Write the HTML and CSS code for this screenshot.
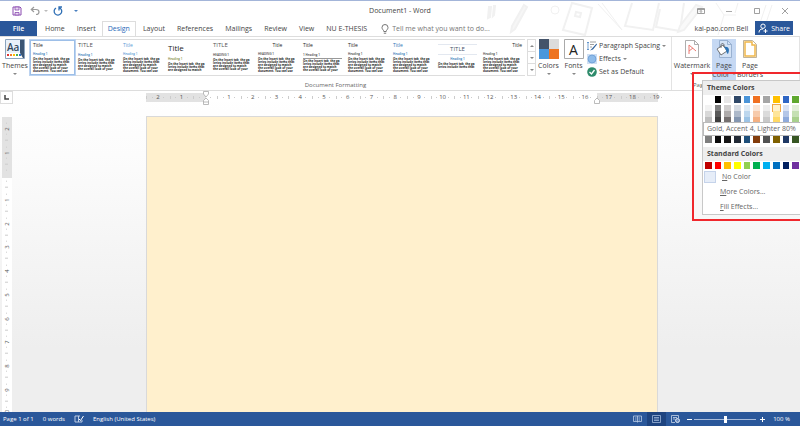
FILE: index.html
```html
<!DOCTYPE html>
<html lang="en">

<head>
  <meta charset="UTF-8">
  <meta name="viewport" content="width=device-width, initial-scale=1.0">
  <title>Document1 - Word</title>
  <link rel="stylesheet" href="styles.css">
</head>

<body>
  <header class="top">
    <svg class="doodles" viewBox="0 0 320 36" aria-hidden="true">
      <g fill="none" stroke="#f1f1f1" stroke-width="2">
        <path d="M9 6l2 0-1 10-2 1zM14 5l1 0-1 9-1 1z" />
        <path d="M44 4l3 2-12 22-4 3 1-6z" fill="#f6f6f6" />
        <circle cx="75" cy="9" r="4" stroke-width="1" />
        <path d="M92 2l20 5-7 27-22-5zM96 11l5 1-1 4-5-1z" />
        <path d="M118 3l24 26M122 2l20 27" stroke-width="1" />
        <path d="M152 2l-7 23 28 4 6-27M180 8l-4 18 24 4 4-28" />
        <path d="M216 4l-16 21-2 6 6-2 18-23z" fill="#f9f9f9" />
        <path d="M236 2l8 12h12M244 14l-6 20M258 2l-3 10M286 4l-10 30M292 4l-10 30" stroke-width="1" />
      </g>
    </svg>

    <div class="titlebar">
      <div class="quick">
        <button type="button" aria-label="Save"><svg width="10" height="10" viewBox="0 0 10 10"><path d="M1 1h7l1 1v7H1z" fill="#fff" stroke="#8a4bb0" /><path d="M3 1h4v3H3zM3 6.500h4V9H3z" fill="#e8d8f0" stroke="#8a4bb0" stroke-width=".8" /></svg></button>
        <button type="button" aria-label="Undo" class="undo"><svg width="10" height="10" viewBox="0 0 10 10"><path d="M4 1L1.300 3.500 4 6M1.500 3.500H6c4 0 4 5 0 5" fill="none" stroke="#9a9a9a" stroke-width="1.200" /></svg></button>
        <span class="caret pale"></span>
        <button type="button" aria-label="Redo"><svg width="10" height="10" viewBox="0 0 10 10"><path d="M6.500 1.800A3.800 3.800 0 1 1 3 2M9 1H6v3.500" fill="none" stroke="#2f6fb5" stroke-width="1.300" /></svg></button>
        <span class="caret blue"></span>
      </div>
      <h1>Document1 - Word</h1>
      <div class="window-buttons">
        <button type="button" aria-label="Ribbon display options"><svg width="8" height="8" viewBox="0 0 8 8"><path d="M.5 1.500h7v5h-7zM.5 2.500h7M4 6V3.500M3 4.500l1-1 1 1" fill="none" stroke="#888" stroke-width=".8" /></svg></button>
        <button type="button" aria-label="Minimize"><svg width="8" height="8" viewBox="0 0 8 8"><path d="M1 4.500h6" stroke="#aaa" /></svg></button>
        <button type="button" aria-label="Maximize"><svg width="8" height="8" viewBox="0 0 8 8"><path d="M1.500 1.500h5v5h-5z" fill="none" stroke="#888" stroke-width=".8" /></svg></button>
        <button type="button" aria-label="Close"><svg width="8" height="8" viewBox="0 0 8 8"><path d="M1 1l6 6M7 1L1 7" stroke="#888" stroke-width=".8" /></svg></button>
      </div>
    </div>

    <nav class="tabs">
      <button type="button" class="file">File</button>
      <a href="#">Home</a>
      <a href="#">Insert</a>
      <a href="#" class="active">Design</a>
      <a href="#">Layout</a>
      <a href="#">References</a>
      <a href="#">Mailings</a>
      <a href="#">Review</a>
      <a href="#">View</a>
      <a href="#">NU E-THESIS</a>
      <label class="tell">
        <svg width="8" height="10" viewBox="0 0 8 10"><path d="M2.800 7.500C2.800 6 1 5.500 1 3.500a3 3 0 0 1 6 0C7 5.500 5.200 6 5.200 7.500zM2.800 9.200h2.400" fill="none" stroke="#666" stroke-width=".9" /></svg>
        <input type="text" placeholder="Tell me what you want to do..." aria-label="Tell me what you want to do">
      </label>
      <span class="user">kai-pao.com Bell</span>
      <button type="button" class="share">
        <svg width="10" height="10" viewBox="0 0 10 10"><path d="M1 9.500C1 7 2.500 6 5 6M7.500 6v4M5.500 8h4" fill="none" stroke="#fff" /><circle cx="5" cy="3.200" r="2.200" fill="none" stroke="#fff" /></svg>
        Share
      </button>
    </nav>
  </header>

  <section class="ribbon">
    <div class="group formatting">
      <div class="tools">
        <button type="button" class="big themes">
          <svg width="20" height="20" viewBox="0 0 20 20"><path d="M.5.5h19v19H.5z" fill="#fff" stroke="#8ba3bd" /><path d="M15 1h4v18h-1L15 14z" fill="#3b5574" /><path d="M1 1h14v13H1z" fill="#e9f1fa" /><text x="2" y="12" class="aa">Aa</text><path d="M2 15h2v2H2z" fill="#d33" /><path d="M5 15h2v2H5z" fill="#ed7d31" /><path d="M8 15h2v2H8z" fill="#ffc000" /><path d="M11 15h2v2h-2z" fill="#4caf50" /><path d="M14 15h2v2h-2z" fill="#2e75c6" /></svg>
          <span>Themes</span>
          <span class="caret"></span>
        </button>
        <div class="gallery" id="gallery"></div>
        <div class="scroller">
          <button type="button" aria-label="Previous row"><span class="caret up"></span></button>
          <button type="button" aria-label="Next row"><span class="caret"></span></button>
          <button type="button" aria-label="More"><span class="caret more"></span></button>
        </div>
        <button type="button" class="big">
          <svg width="20" height="20" viewBox="0 0 20 20"><path d="M0 0h10v10H0z" fill="#44546a" /><path d="M10 0h10v10H10z" fill="#dcdcdc" /><path d="M0 10h10v10H0z" fill="#4a97dc" /><path d="M10 10h10v10H10z" fill="#ee7420" /></svg>
          <span>Colors</span>
          <span class="caret"></span>
        </button>
        <button type="button" class="big">
          <svg width="20" height="20" viewBox="0 0 20 20"><path d="M.5.5h19v19H.5z" fill="#fff" stroke="#aaa" /><text x="5" y="16" class="letter">A</text></svg>
          <span>Fonts</span>
          <span class="caret"></span>
        </button>
        <div class="stack">
          <button type="button"><svg width="10" height="10" viewBox="0 0 10 10"><path d="M3 1h6M3 3.500h4M3 6h2" stroke="#888" stroke-width=".8" /><path d="M1 1v8M0 2l1-1 1 1M0 8l1 1 1-1" fill="none" stroke="#3d7cc0" stroke-width=".7" /><path d="M9.500 2.500L5 7.500l-2 2 3-1 4-5z" fill="#33649e" /></svg>Paragraph Spacing<span class="caret"></span></button>
          <button type="button"><svg width="10" height="10" viewBox="0 0 10 10"><path d="M0 0h10v10H0z" fill="#cfdff3" /><circle cx="5" cy="5" r="4" fill="#8fbcea" stroke="#5b90cc" stroke-width=".6" /></svg>Effects<span class="caret"></span></button>
          <button type="button"><svg width="10" height="10" viewBox="0 0 10 10"><circle cx="5" cy="5" r="4.800" fill="#2e8b6b" /><path d="M2.500 5l2 2L7.500 3" fill="none" stroke="#fff" stroke-width="1.300" /></svg>Set as Default</button>
        </div>
      </div>
      <div class="caption">Document Formatting</div>
    </div>

    <div class="group background">
      <div class="tools">
        <button type="button" class="big watermark">
          <svg width="14" height="18" viewBox="0 0 14 18"><path d="M.5.5h9l4 4v13H.5z" fill="#fff" stroke="#999" stroke-width=".8" /><path d="M9.500.5v4h4" fill="none" stroke="#999" stroke-width=".8" /><path d="M4 14V5l7 6M4 11l4-3" fill="none" stroke="#ec7a72" /></svg>
          <span>Watermark</span>
          <span class="caret"></span>
        </button>
        <div class="dropdown">
          <button type="button" class="big pressed" aria-expanded="true">
            <svg width="18" height="18" viewBox="0 0 18 18"><path d="M4.500.5h8l4 4v13h-12z" fill="#d3e2f5" stroke="#8ca6c8" stroke-width=".8" /><path d="M12.500.5v4h4" fill="none" stroke="#8ca6c8" stroke-width=".8" /><path d="M2 9l6-4 4 6-6 4z" fill="#fff" stroke="#555" stroke-width=".8" /><path d="M6 8V5c0-2 3-2 3 0v2" fill="none" stroke="#555" stroke-width=".8" /><path d="M9 7c5-1 6 3 4 7-2-1-1-4-4-7z" fill="#2e75b6" /></svg>
            <span>Page</span>
            <span>Color<i class="caret"></i></span>
          </button>
          <div class="color-menu">
            <h2>Theme Colors</h2>
            <div class="swatches" id="themeColors"></div>
            <div class="swatches tints" id="themeTints"></div>
            <div class="tooltip" role="tooltip">Gold, Accent 4, Lighter 80%</div>
            <div class="swatches" id="themeDark"></div>
            <h2>Standard Colors</h2>
            <div class="swatches" id="standardColors"></div>
            <button type="button" class="item none"><i></i><span><u>N</u>o Color</span></button>
            <button type="button" class="item"><span><u>M</u>ore Colors...</span></button>
            <button type="button" class="item"><span><u>F</u>ill Effects...</span></button>
          </div>
          <div class="highlight"></div>
        </div>
        <button type="button" class="big borders">
          <svg width="14" height="18" viewBox="0 0 14 18"><path d="M.5.5h9l4 4v13H.5z" fill="#fff" stroke="#b0a080" stroke-width=".8" /><path d="M2 2h7v3h3v11H2z" fill="none" stroke="#f0b64a" stroke-width="1.500" /></svg>
          <span>Page</span>
          <span>Borders</span>
        </button>
      </div>
      <div class="caption">Page Background</div>
    </div>
  </section>

  <main class="workspace">
    <div class="ruler-row">
      <button type="button" class="tab-stop" aria-label="Left tab"><svg width="5" height="5" viewBox="0 0 5 5"><path d="M1 0v4h4" fill="none" stroke="#444" stroke-width="1.500" /></svg></button>
      <div class="ruler-area">
        <div class="ruler">
          <div class="scale" id="hScale"></div>
          <svg class="marker indent" width="8" height="14" viewBox="0 0 8 14"><path d="M1.500.5h5V3L4 6 1.500 3zM4 7l2.500 2.500v4h-5v-4zM1.500 11h5" fill="#fff" stroke="#aaa" stroke-width=".8" /></svg>
          <svg class="marker right" width="8" height="7" viewBox="0 0 8 7"><path d="M4 1l2.500 2.500v3h-5v-3z" fill="#fff" stroke="#aaa" stroke-width=".8" /></svg>
        </div>
      </div>
    </div>
    <div class="canvas">
      <div class="v-ruler">
        <div class="scale" id="vScale"></div>
      </div>
      <div class="page-area">
        <div class="page"></div>
      </div>
    </div>
  </main>

  <footer class="status">
    <span>Page 1 of 1</span>
    <span>0 words</span>
    <svg width="10" height="8" viewBox="0 0 10 8"><path d="M6 1H1v6h7V5M4.500 1v6" fill="none" stroke="#c9d6ea" stroke-width=".9" /><path d="M5 4l1.500 1.500L9.500 1" fill="none" stroke="#fff" /></svg>
    <span>English (United States)</span>
    <div class="views">
      <button type="button" aria-label="Read mode"><svg width="9" height="8" viewBox="0 0 9 8"><path d="M.5 1h8v5.500h-8zM4.500 1v6.500M2 3h1.500M2 5h1.500M5.500 3H7M5.500 5H7" fill="none" stroke="#b9cae4" stroke-width=".8" /></svg></button>
      <button type="button" class="on" aria-label="Print layout"><svg width="9" height="8" viewBox="0 0 9 8"><path d="M.5.5h8v7h-8zM2 2.500h5M2 4h5M2 5.500h5" fill="none" stroke="#9db5d8" stroke-width=".8" /></svg></button>
      <button type="button" aria-label="Web layout"><svg width="9" height="8" viewBox="0 0 9 8"><path d="M4 7.500H.5v-7h7V3M2 2.500h4M2 4h2" fill="none" stroke="#c9d6ea" stroke-width=".8" /><circle cx="6.500" cy="5.500" r="2" fill="#6f90c4" stroke="#fff" stroke-width=".8" /></svg></button>
      <button type="button" class="step minus" aria-label="Zoom out"></button>
      <input type="range" min="10" max="190" value="100" aria-label="Zoom">
      <button type="button" class="step plus" aria-label="Zoom in"></button>
      <span class="percent">100 %</span>
    </div>
  </footer>

  <script src="script.js"></script>
</body>

</html>
```
FILE: styles.css
```css
* {
  box-sizing: border-box;
}

body {
  display: flex;
  flex-direction: column;
  height: 100vh;
  margin: 0;
  overflow: hidden;
  font-family: "Open Sans", "Noto Sans", sans-serif;
  font-size: 7px;
  line-height: 10px;
  color: #444;
  background: #fff;
}

button {
  padding: 0;
  border: 0;
  background: none;
  font: inherit;
  color: inherit;
}

svg {
  display: block;
  flex: none;
}

/* little drop-down arrow */
.caret {
  display: inline-block;
  flex: none;
  border: 2px solid transparent;
  border-top-color: #888;
  border-bottom: 0;
}

.caret.pale {
  border-top-color: #bbb;
}

.caret.blue {
  border-top-color: #4a80c0;
}

.caret.up {
  transform: rotate(180deg);
}

/* title bar */
.top {
  position: relative;
  border-top: 1px solid #a3b5d9;
}

.doodles {
  position: absolute;
  top: 0;
  right: 0;
  width: 320px;
  height: 36px;
}

.titlebar {
  position: relative;
  display: grid;
  grid-template-columns: 1fr auto 1fr;
  align-items: center;
  height: 20px;
}

.titlebar h1 {
  margin: 0;
  font-size: 7px;
  font-weight: 400;
}

.quick {
  display: flex;
  align-items: center;
  padding-left: 12px;
}

.quick .undo {
  margin-left: 8px;
}

.quick .caret {
  margin: 0 5px 0 4px;
}

.quick .caret.blue {
  margin-left: 11px;
}

.window-buttons {
  display: flex;
  justify-content: flex-end;
  gap: 20px;
  padding-right: 11px;
}

/* ribbon tabs */
.tabs {
  position: relative;
  display: flex;
  align-items: stretch;
  height: 15px;
  line-height: 15px;
}

.tabs a {
  padding: 0 6px;
  color: #444;
  text-decoration: none;
}

.tabs .file {
  width: 37px;
  margin-right: 2px;
  background: #2a579a;
  color: #fff;
  font-weight: 600;
}

.tabs a.active {
  padding: 0 5px;
  margin-right: 1px;
  border: 1px solid #ddd;
  border-bottom: 0;
  background: #fff;
  color: #2a6ab8;
  line-height: 13px;
}

.tell {
  display: flex;
  flex: 1;
  align-items: center;
  gap: 3px;
  padding-left: 8px;
}

.tell input {
  flex: 1;
  min-width: 0;
  padding: 0;
  border: 0;
  background: none;
  font: inherit;
}

.tell input::placeholder {
  color: #777;
  opacity: 1;
}

.user {
  margin-right: 7px;
}

.share {
  display: flex;
  align-items: center;
  gap: 3px;
  margin: 0 7px 1px 0;
  padding: 0 3px;
  background: #2a579a;
  color: #fff;
}

/* ribbon */
.ribbon {
  display: flex;
  height: 55px;
  border-top: 1px solid #ddd;
  border-bottom: 1px solid #ddd;
}

.group {
  display: flex;
  flex-direction: column;
  border-right: 1px solid #e3e3e3;
}

.tools {
  display: flex;
  align-items: flex-start;
  height: 44px;
  padding-top: 2px;
}

.caption {
  font-size: 6px;
  line-height: 10px;
  text-align: center;
  color: #666;
}

.formatting {
  width: 672px;
}

.big {
  display: flex;
  flex-direction: column;
  align-items: center;
  width: 25px;
  height: 41px;
}

.big svg {
  margin-bottom: 2px;
}

.big svg[height="18"] {
  margin: 1px 0 3px;
}

.big span {
  line-height: 9px;
}

.big > .caret {
  margin-top: 3px;
}

.themes {
  width: 30px;
}

.aa {
  font: 600 10px "Open Sans", sans-serif;
  fill: #34495e;
}

.letter {
  font: 14px "Open Sans", sans-serif;
  fill: #222;
}

.gallery {
  display: flex;
  height: 37px;
  border-top: 1px solid #ddd;
  border-bottom: 1px solid #ddd;
}

.style-set {
  display: flex;
  flex-direction: column;
  width: 45px;
  height: 35px;
  padding: 1px 3px 0;
  text-align: left;
}

.style-set.selected {
  border: 1px solid #9dbfe8;
  outline: 1px solid #bcd3f0;
  padding: 0 2px;
}

.style-set b {
  font-size: 5px;
  font-weight: 400;
  line-height: 9px;
  color: #222;
}

.style-set em {
  margin-top: 2px;
  font-size: 3px;
  font-style: normal;
  font-weight: 600;
  line-height: 5px;
}

.style-set p {
  margin: 1px 0 0;
  font-size: 3px;
  font-weight: 700;
  line-height: 3px;
  white-space: pre;
  color: #222;
}

.style-set.caps b {
  font-size: 6px;
  color: #555;
}

.style-set.large b {
  font-size: 8px;
  line-height: 14px;
}

.style-set.low em {
  margin-top: 3px;
}

.style-set.blue b,
.style-set.blue em,
.style-set.blue-head em {
  color: #2e75b6;
}

.style-set.light b,
.style-set.light em {
  color: #5b9bd5;
}

.style-set.olive em {
  color: #7f8a3a;
}

.style-set.centered b,
.style-set.middle b,
.style-set.centered em {
  text-align: center;
}

.style-set.centered b {
  margin-top: 3px;
  border-top: 1px solid #e3e8f0;
  border-bottom: 1px solid #e3e8f0;
  color: #44546a;
}

.style-set.ruled em {
  border-bottom: 1px solid #999;
}

.style-set.right b {
  text-align: right;
}

.scroller {
  display: flex;
  flex-direction: column;
  width: 9px;
  margin: 0 0 0 2px;
}

.scroller button {
  display: flex;
  align-items: center;
  justify-content: center;
  height: 13px;
  margin-bottom: -1px;
  border: 1px solid #ddd;
}

.stack {
  padding-left: 1px;
}

.stack button {
  display: flex;
  align-items: center;
  gap: 2px;
  height: 13px;
}

.watermark {
  width: 40px;
}

.background {
  flex: 1;
  min-width: 0;
}

.background .caption {
  padding-left: 21px;
  text-align: left;
}

.borders {
  width: 28px;
}

.dropdown {
  position: relative;
}

.pressed {
  width: 24px;
  background: #c5d8f3;
}

.pressed .caret {
  margin: 0 0 2px 2px;
}

/* page color menu */
.color-menu {
  position: absolute;
  top: 41px;
  left: -10px;
  z-index: 1;
  width: 102px;
  border: 1px solid #c8c8c8;
  background: #fff;
}

.color-menu h2 {
  margin: 0;
  padding-left: 4px;
  background: #eee;
  font-size: 7px;
  font-weight: 700;
  line-height: 14px;
}

.swatches {
  display: grid;
  grid-template-columns: repeat(10, 1fr);
  column-gap: 3px;
  width: 94px;
  margin: 1px 0 0 2px;
}

.swatches button {
  height: 7px;
}

.tints {
  margin-top: 2px;
}

.tints button {
  height: 6px;
}

.tints .hover {
  outline: 1px solid #f0a848;
}

.tooltip {
  position: relative;
  margin-top: -1px;
  padding-left: 3px;
  border: 1px solid #bbb;
  background: #fff;
  line-height: 12px;
  white-space: nowrap;
  color: #666;
}

#themeDark {
  margin: 0 0 4px 2px;
}

.item {
  display: flex;
  align-items: center;
  width: 100%;
  height: 15px;
  padding-left: 17px;
  color: #666;
}

.item.none {
  gap: 6px;
  padding-left: 1px;
}

.item i {
  width: 12px;
  height: 12px;
  border: 1px solid #c5d3ea;
  background: #e6edf8;
}

.highlight {
  position: absolute;
  top: 33px;
  left: -20px;
  z-index: 2;
  width: 120px;
  height: 149px;
  border: 2px solid #f0282d;
  pointer-events: none;
}

/* rulers and page */
.workspace {
  display: flex;
  flex: 1;
  flex-direction: column;
  min-height: 0;
  background: linear-gradient(#fff, #fcfcfc 20%, #eee 80%);
}

.ruler-row {
  display: flex;
  height: 25px;
}

.tab-stop {
  display: flex;
  align-items: center;
  justify-content: center;
  width: 13px;
  height: 13px;
  margin-right: 1px;
  border: 1px solid #ddd;
}

.ruler-area,
.page-area {
  display: flex;
  flex: 1;
  justify-content: center;
  padding-right: 10px;
}

.ruler {
  position: relative;
  width: 512px;
}

.scale {
  display: grid;
  font-size: 6px;
  color: #555;
}

.ruler .scale {
  grid-template-columns: repeat(22, 1fr);
  width: 522px;
  height: 9px;
  margin-top: 2px;
  background: linear-gradient(90deg, #e2e2e2 60px, #fff 60px 451px, #e2e2e2 451px 512px, transparent 512px);
  line-height: 9px;
  text-align: center;
}

.ruler .scale span {
  background:
    linear-gradient(#ccc, #ccc) 0 50% / 1px 3px no-repeat,
    linear-gradient(#ccc, #ccc) 25% 50% / 1px 1px no-repeat,
    linear-gradient(#ccc, #ccc) 75% 50% / 1px 1px no-repeat;
}

.marker {
  position: absolute;
  top: 0;
}

.marker.indent {
  left: 56px;
}

.marker.right {
  top: 6px;
  left: 447px;
}

.canvas {
  display: flex;
  flex: 1;
  min-height: 0;
}

.v-ruler {
  width: 10px;
  margin: 0 2px;
  overflow: hidden;
}

.v-ruler .scale {
  grid-template-rows: repeat(13, 1fr);
  height: 308px;
  margin-top: 1px;
  background: linear-gradient(#e2e2e2 61px, #fff 61px);
}

.v-ruler span {
  writing-mode: vertical-rl;
  transform: rotate(180deg);
  line-height: 10px;
  text-align: center;
  background:
    linear-gradient(#ccc, #ccc) 50% 0 / 3px 1px no-repeat,
    linear-gradient(#ccc, #ccc) 50% 25% / 1px 1px no-repeat,
    linear-gradient(#ccc, #ccc) 50% 75% / 1px 1px no-repeat;
}

.page {
  width: 512px;
  border: 1px solid #d9d9d9;
  border-bottom: 0;
  background: #fff0cd;
}

/* status bar */
.status {
  display: flex;
  align-items: center;
  gap: 9px;
  height: 14px;
  padding: 0 10px 0 3px;
  background: #2a579a;
  color: #fff;
  font-size: 6px;
}

.views {
  display: flex;
  align-items: center;
  margin-left: auto;
}

.views button {
  display: flex;
  align-items: center;
  justify-content: center;
  width: 19px;
  height: 14px;
}

.views .on {
  background: #1e4480;
}

.views .step {
  width: 6px;
  margin-left: 1px;
  background: linear-gradient(#fff, #fff) 50% 50% / 5px 1px no-repeat;
}

.views .plus {
  margin: 0 8px 0 3px;
  background:
    linear-gradient(#fff, #fff) 50% 50% / 5px 1px no-repeat,
    linear-gradient(#fff, #fff) 50% 50% / 1px 5px no-repeat;
}

.views input {
  appearance: none;
  width: 62px;
  height: 8px;
  margin: 0 0 0 2px;
  background: linear-gradient(#a9bcdb, #a9bcdb) 50% 50% / 100% 1px no-repeat;
}

.views input::-webkit-slider-thumb {
  appearance: none;
  width: 3px;
  height: 7px;
  background: #fff;
}
```
FILE: script.js
```js
const themeColors = ['#ffffff', '#000000', '#e7e6e6', '#2f4868', '#4a94d8', '#f07020', '#a5a5a5', '#ffc000', '#2f66c4', '#5fa82f'];
const themeTints = [
  '#f2f2f2', '#7f7f7f', '#d0cece', '#d6dce4', '#deebf6', '#fbe5d5', '#ededed', '#fff2cc', '#d9e2f3', '#e2efd9',
  '#d8d8d8', '#595959', '#aeabab', '#adb9ca', '#bdd7ee', '#f7cbac', '#dbdbdb', '#fee599', '#b4c6e7', '#c5e0b3',
  '#bfbfbf', '#3f3f3f', '#757070', '#8496b0', '#9cc3e5', '#f4b183', '#c9c9c9', '#ffd965', '#8eaadb', '#a8d08d'
];
const themeDark = ['#7f7f7f', '#0c0c0c', '#171616', '#222a35', '#1e4e79', '#833c0b', '#525252', '#7f6000', '#1f3864', '#375623'];
const standardColors = ['#c00000', '#ff0000', '#ffc000', '#ffff00', '#92d050', '#00b050', '#00b0f0', '#0070c0', '#002060', '#7030a0'];

const styleSets = [
  { title: 'Title', heading: 'Heading 1', lines: 5, cls: 'selected blue-head' },
  { title: 'TITLE', heading: 'Heading 1', lines: 4, cls: 'caps low blue-head' },
  { title: 'Title', heading: 'Heading 1', lines: 5, cls: 'light' },
  { title: 'Title', heading: 'Heading 1', lines: 3, cls: 'large olive' },
  { title: 'TITLE', heading: 'HEADING 1', lines: 4, cls: 'caps low' },
  { title: 'Title', heading: 'HEADING 1', lines: 5, cls: 'middle' },
  { title: 'Title', heading: '1   Heading 1', lines: 4, cls: 'low ruled' },
  { title: 'Title', heading: 'Heading 1', lines: 5, cls: '' },
  { title: 'Title', heading: 'Heading 1', lines: 5, cls: 'blue' },
  { title: 'TITLE', heading: 'Heading 1', lines: 2, cls: 'caps centered blue-head' },
  { title: 'Title', heading: 'Heading 1', lines: 5, cls: 'right' }
];
const sample = [
  'On the Insert tab, the ga',
  'leries include items that',
  'are designed to match',
  'the overall look of your',
  'document. You can use'
];

function fillSwatches(id, colors) {
  const box = document.getElementById(id);
  colors.forEach((color) => {
    const swatch = document.createElement('button');
    swatch.type = 'button';
    swatch.setAttribute('aria-label', color);
    swatch.style.background = color;
    if (id === 'themeTints' && color === '#fff2cc') {
      swatch.className = 'hover';
    }
    box.appendChild(swatch);
  });
}

function fillScale(id, last) {
  let html = '<span>2</span><span>1</span><span></span>';
  for (let i = 1; i <= last; i++) {
    html += `<span>${i}</span>`;
  }
  document.getElementById(id).innerHTML = html;
}

fillSwatches('themeColors', themeColors);
fillSwatches('themeTints', themeTints);
fillSwatches('themeDark', themeDark);
fillSwatches('standardColors', standardColors);
fillScale('hScale', 19);
fillScale('vScale', 10);

document.getElementById('gallery').innerHTML = styleSets.map((set) =>
  `<button type="button" class="style-set ${set.cls}"><b>${set.title}</b><em>${set.heading}</em><p>${sample.slice(0, set.lines).join('\n')}</p></button>`
).join('');
```
